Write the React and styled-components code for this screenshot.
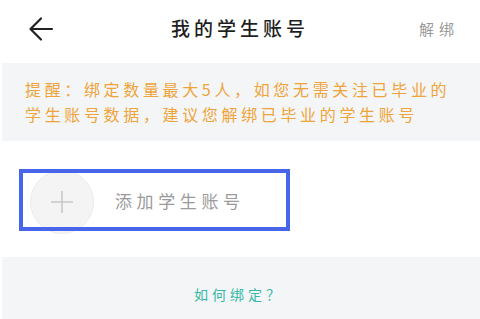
import React from "react";
import styled, { createGlobalStyle } from "styled-components";

const Global = createGlobalStyle`
  html, body { margin: 0; padding: 0; background: #fff; }
  body { font-family: "Noto Sans CJK SC", "Noto Sans", sans-serif; }
`;

const Page = styled.div`
  width: 480px;
  height: 319px;
  overflow: hidden;
  background: #fff;
  display: flex;
  flex-direction: column;
`;

const Header = styled.div`
  height: 63px;
  display: flex;
  align-items: center;
  justify-content: space-between;
  padding: 0 24px 0 28px;
  box-sizing: border-box;
  position: relative;
`;

const BackBtn = styled.button`
  border: none;
  background: none;
  padding: 0;
  width: 26px;
  height: 26px;
  display: flex;
  align-items: center;
  justify-content: center;
  margin-top: -6px;
`;

const Title = styled.h1`
  margin: 0;
  font-size: 19px;
  font-weight: 500;
  color: #1f1f1f;
  letter-spacing: 4px;
  position: absolute;
  left: 0;
  right: 0;
  text-align: center;
  top: 14px;
  pointer-events: none;
`;

const Unbind = styled.span`
  font-size: 15px;
  color: #9a9a9a;
  letter-spacing: 5px;
  margin-top: -6px;
  margin-right: -3px;
`;

const Band = styled.div`
  margin-left: 2px;
  background: #f4f5f7;
`;

const Notice = styled(Band)`
  height: 78px;
  box-sizing: border-box;
  padding: 14px 0 0 23px;
  color: #efa43a;
  font-size: 16px;
  line-height: 25px;
  letter-spacing: 3.65px;
  white-space: nowrap;
`;

const AddArea = styled.div`
  height: 116px;
  display: flex;
  align-items: center;
  padding-left: 19px;
  padding-top: 2px;
  box-sizing: border-box;
`;

const AddRow = styled.div`
  position: relative;
  width: 271px;
  height: 62px;
  display: flex;
  align-items: center;
  box-sizing: border-box;
  padding-left: 11px;
  &::after {
    content: "";
    position: absolute;
    inset: 0;
    border: 4px solid #4766ec;
    pointer-events: none;
  }
`;

const Circle = styled.div`
  width: 64px;
  height: 64px;
  border-radius: 50%;
  background: #f4f4f4;
  border: 1px solid #ececec;
  box-sizing: border-box;
  display: flex;
  align-items: center;
  justify-content: center;
  margin-top: 4px;
  flex-shrink: 0;
`;

const AddLabel = styled.span`
  margin-left: 21px;
  font-size: 17px;
  color: #9b9b9b;
  letter-spacing: 4.6px;
`;

const Footer = styled(Band)`
  flex: 1;
  display: flex;
  justify-content: center;
  align-items: flex-start;
  padding-top: 27px;
  padding-right: 4px;
  box-sizing: border-box;
`;

const HowLink = styled.span`
  font-size: 14px;
  color: #35b9a6;
  letter-spacing: 4px;
`;

export default function App() {
  return (
    <>
      <Global />
      <Page>
        <Header>
          <BackBtn aria-label="返回">
            <svg width="26" height="26" viewBox="0 0 26 26" fill="none">
              <path d="M24 13H3M13 2.5L2.5 13L13 23.5" stroke="#222" strokeWidth="2.2" strokeLinecap="round" strokeLinejoin="round" />
            </svg>
          </BackBtn>
          <Title>我的学生账号</Title>
          <Unbind>解绑</Unbind>
        </Header>
        <Notice>
          提醒：绑定数量最大5人，如您无需关注已毕业的
          <br />
          学生账号数据，建议您解绑已毕业的学生账号
        </Notice>
        <AddArea>
          <AddRow>
            <Circle>
              <svg width="24" height="24" viewBox="0 0 24 24">
                <path d="M12 1V23M1 12H23" stroke="#c8c8c8" strokeWidth="1.6" />
              </svg>
            </Circle>
            <AddLabel>添加学生账号</AddLabel>
          </AddRow>
        </AddArea>
        <Footer>
          <HowLink>如何绑定？</HowLink>
        </Footer>
      </Page>
    </>
  );
}
